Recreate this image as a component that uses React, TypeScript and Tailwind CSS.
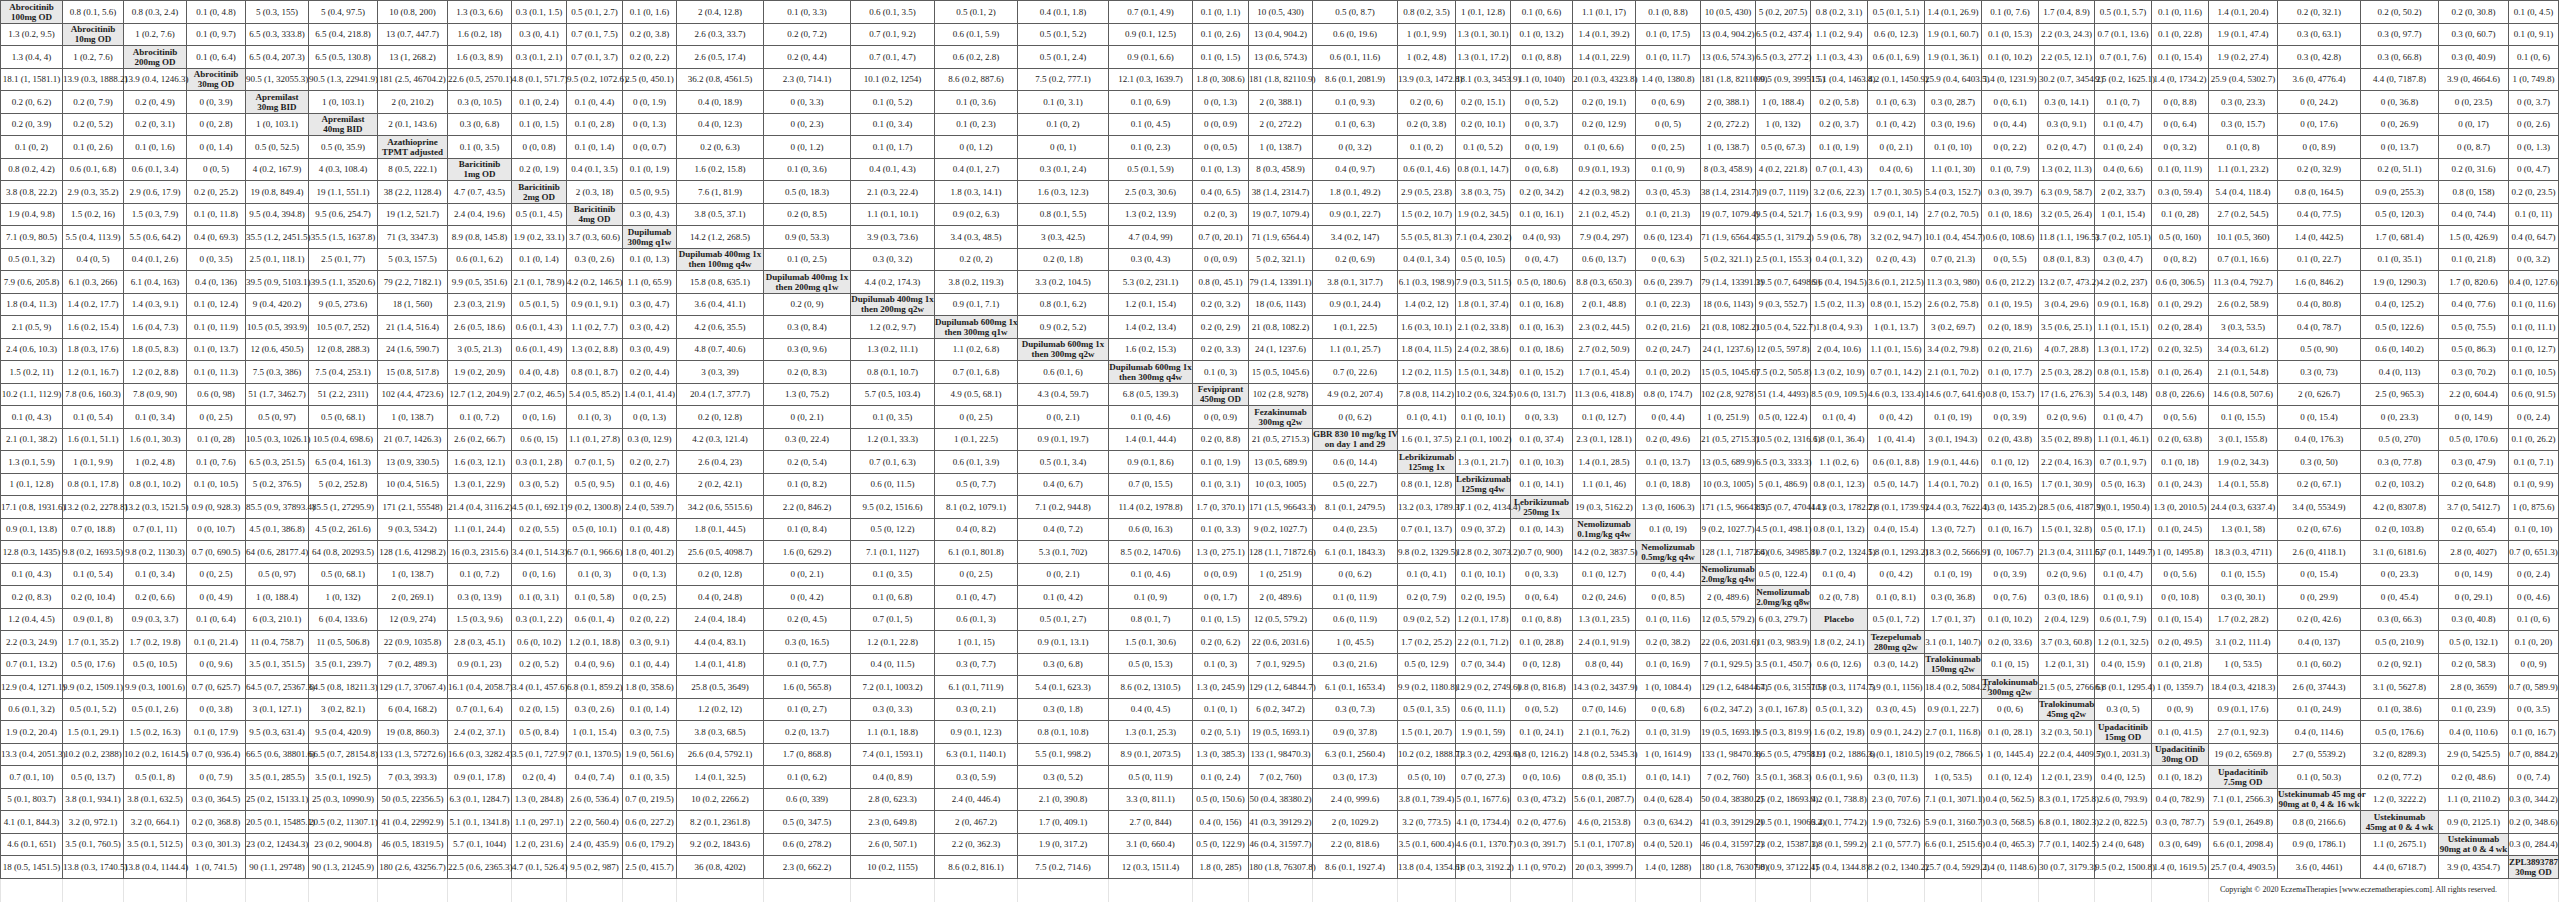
import React from 'react';

// league table: row drug vs column drug, diagonal holds the treatment name
const NAMES: string[] = [
  'Abrocitinib|100mg OD',
  'Abrocitinib|10mg OD',
  'Abrocitinib|200mg OD',
  'Abrocitinib|30mg OD',
  'Apremilast|30mg BID',
  'Apremilast|40mg BID',
  'Azathioprine|TPMT adjusted',
  'Baricitinib|1mg OD',
  'Baricitinib|2mg OD',
  'Baricitinib|4mg OD',
  'Dupilumab|300mg q1w',
  'Dupilumab 400mg 1x|then 100mg q4w',
  'Dupilumab 400mg 1x|then 200mg q1w',
  'Dupilumab 400mg 1x|then 200mg q2w',
  'Dupilumab 600mg 1x|then 300mg q1w',
  'Dupilumab 600mg 1x|then 300mg q2w',
  'Dupilumab 600mg 1x|then 300mg q4w',
  'Fevipiprant|450mg OD',
  'Fezakinumab|300mg q2w',
  'GBR 830 10 mg/kg IV|on day 1 and 29',
  'Lebrikizumab|125mg 1x',
  'Lebrikizumab|125mg q4w',
  'Lebrikizumab|250mg 1x',
  'Nemolizumab|0.1mg/kg q4w',
  'Nemolizumab|0.5mg/kg q4w',
  'Nemolizumab|2.0mg/kg q4w',
  'Nemolizumab|2.0mg/kg q8w',
  'Placebo',
  'Tezepelumab|280mg q2w',
  'Tralokinumab|150mg q2w',
  'Tralokinumab|300mg q2w',
  'Tralokinumab|45mg q2w',
  'Upadacitinib|15mg OD',
  'Upadacitinib|30mg OD',
  'Upadacitinib|7.5mg OD',
  'Ustekinumab 45 mg or|90mg at 0, 4 & 16 wk',
  'Ustekinumab|45mg at 0 & 4 wk',
  'Ustekinumab|90mg at 0 & 4 wk',
  'ZPL3893787|30mg OD',
];

// first column (each drug vs Abrocitinib 100mg OD)
const COL1: [number, number, number][] = [
  [1.3, 0.2, 9.5],
  [1.3, 0.4, 4],
  [18.1, 1, 1581.1],
  [0.2, 0, 6.2],
  [0.2, 0, 3.9],
  [0.1, 0, 2],
  [0.8, 0.2, 4.2],
  [3.8, 0.8, 22.2],
  [1.9, 0.4, 9.8],
  [7.1, 0.9, 80.5],
  [0.5, 0.1, 3.2],
  [7.9, 0.6, 205.8],
  [1.8, 0.4, 11.3],
  [2.1, 0.5, 9],
  [2.4, 0.6, 10.3],
  [1.5, 0.2, 11],
  [10.2, 1.1, 112.9],
  [0.1, 0, 4.3],
  [2.1, 0.1, 38.2],
  [1.3, 0.1, 5.9],
  [1, 0.1, 12.8],
  [17.1, 0.8, 1931.6],
  [0.9, 0.1, 13.8],
  [12.8, 0.3, 1435],
  [0.1, 0, 4.3],
  [0.2, 0, 8.3],
  [1.2, 0.4, 4.5],
  [2.2, 0.3, 24.9],
  [0.7, 0.1, 13.2],
  [12.9, 0.4, 1271.1],
  [0.6, 0.1, 3.2],
  [1.9, 0.2, 20.4],
  [13.3, 0.4, 2051.3],
  [0.7, 0.1, 10],
  [5, 0.1, 803.7],
  [4.1, 0.1, 844.3],
  [4.6, 0.1, 651],
  [18, 0.5, 1451.5],
];

const COL_W = [
  'w-[62px]', 'w-[61px]', 'w-[63px]', 'w-[59px]', 'w-[63px]', 'w-[69px]', 'w-[70px]', 'w-[64px]',
  'w-[55px]', 'w-[56px]', 'w-[54px]', 'w-[87px]', 'w-[87px]', 'w-[84px]', 'w-[83px]', 'w-[91px]',
  'w-[84px]', 'w-[56px]', 'w-[64px]', 'w-[85px]', 'w-[58px]', 'w-[55px]', 'w-[62px]', 'w-[63px]',
  'w-[65px]', 'w-[55px]', 'w-[55px]', 'w-[57px]', 'w-[57px]', 'w-[57px]', 'w-[57px]', 'w-[56px]',
  'w-[57px]', 'w-[57px]', 'w-[69px]', 'w-[83px]', 'w-[78px]', 'w-[70px]', 'w-[50px]',
];

const SKEW = 0.07;
const U0 = 0.7;
const R = [1, ...COL1.map((c) => c[0])];
const U = [
  U0,
  ...COL1.map(([p, , hi]) => {
    const zh = Math.log(hi / p);
    const z = (-1 + Math.sqrt(1 + 4 * SKEW * zh)) / (2 * SKEW);
    return Math.sqrt(Math.max(z * z - U0 * U0, 0.09));
  }),
];

function fmt(x: number) {
  const v = Math.round(x * 10) / 10;
  return v < 0.05 ? '0' : String(v);
}

function cellText(i: number, j: number) {
  if (j === 0) {
    const [p, lo, hi] = COL1[i - 1];
    return `${fmt(p)} (${fmt(lo)}, ${fmt(hi)})`;
  }
  const p = R[i] / R[j];
  const z = Math.sqrt(U[i] ** 2 + U[j] ** 2);
  const lo = p * Math.exp(-z);
  const hi = p * Math.exp(z * (1 + SKEW * z));
  return `${fmt(p)} (${fmt(lo)}, ${fmt(hi)})`;
}

const cellCls =
  'p-0 border border-[#5c5c5c] text-center align-middle whitespace-nowrap text-[9px] leading-[10px] text-[#1c1c1c]';

export default function App() {
  return (
    <div className="min-h-screen bg-white font-['Liberation_Serif','Times_New_Roman',serif]">
      <table className="table-fixed border-collapse w-[2558px]">
        <colgroup>
          {COL_W.map((w, k) => (
            <col key={k} className={w} />
          ))}
        </colgroup>
        <tbody>
          {NAMES.map((name, i) => (
            <tr key={i} className="h-[22.5px]">
              {NAMES.map((_, j) =>
                i === j ? (
                  <td key={j} className={`${cellCls} bg-[#e8e8e8] font-bold`}>
                    {name.split('|').map((part, k) => (
                      <div key={k}>{part}</div>
                    ))}
                  </td>
                ) : (
                  <td key={j} className={cellCls}>
                    {cellText(i, j)}
                  </td>
                )
              )}
            </tr>
          ))}
          <tr className="h-[24px]">
            {NAMES.slice(0, 34).map((_, j) => (
              <td key={j} className="p-0 border border-[#e4e4e4]" />
            ))}
            <td colSpan={4} className="p-0 border border-[#e4e4e4] text-center whitespace-nowrap text-[8px] text-[#1c1c1c]">
              Copyright © 2020 EczemaTherapies [www.eczematherapies.com]. All rights reserved.
            </td>
            <td className="p-0 border border-[#e4e4e4]" />
          </tr>
        </tbody>
      </table>
    </div>
  );
}
